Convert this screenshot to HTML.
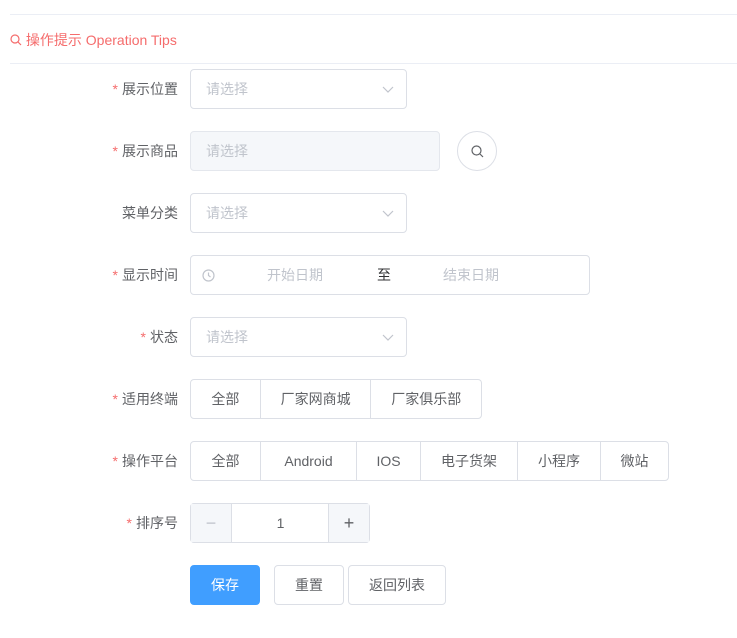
<!DOCTYPE html>
<html><head><meta charset="utf-8"><style>
*{box-sizing:border-box;margin:0;padding:0}
body{width:737px;height:638px;background:#fff;font-family:"Liberation Sans","Noto Sans CJK SC",sans-serif;font-size:14px;color:#606266;position:relative;overflow:hidden}
.a{position:absolute}
.line{position:absolute;left:10px;right:0;height:1px;background:#ebeef5}
.lbl{position:absolute;right:559px;width:170px;text-align:right;height:40px;line-height:40px;color:#606266}
.lbl b{color:#f56c6c;font-weight:normal;margin-right:4px}
.box{position:absolute;height:40px;border:1px solid #dcdfe6;border-radius:4px;background:#fff}
.ph{color:#c0c4cc;line-height:38px;padding-left:15px}
.arrow{position:absolute;right:12px;top:13px}
.seg{position:absolute;height:40px;border:1px solid #dcdfe6;display:flex;border-radius:4px;overflow:hidden}
.seg div{height:38px;line-height:38px;text-align:center;border-left:1px solid #dcdfe6;color:#606266}
.seg div:first-child{border-left:none}
.btn{position:absolute;height:40px;line-height:38px;text-align:center;border:1px solid #dcdfe6;border-radius:4px;color:#606266;background:#fff}
</style></head><body>
<div class="line" style="top:14px"></div>
<div class="a" style="left:10px;top:30px;color:#f56c6c;font-size:14px;line-height:20px">
<svg width="12" height="12" viewBox="0 0 12 12" style="vertical-align:-1px"><circle cx="5" cy="5" r="4" fill="none" stroke="#f56c6c" stroke-width="1.2"/><path d="M8 8L11 11" stroke="#f56c6c" stroke-width="1.2"/></svg> 操作提示 Operation Tips</div>
<div class="line" style="top:63px"></div>

<div class="lbl" style="top:69px"><b>*</b>展示位置</div>
<div class="box" style="left:190px;top:69px;width:217px"><div class="ph">请选择</div><svg class="arrow" width="12" height="12" viewBox="0 0 12 12"><path d="M1 4L6 9L11 4" fill="none" stroke="#c0c4cc" stroke-width="1.2"/></svg></div>

<div class="lbl" style="top:131px"><b>*</b>展示商品</div>
<div class="box" style="left:190px;top:131px;width:250px;background:#f5f7fa;border-color:#e4e7ed"><div class="ph">请选择</div></div>
<div class="box" style="left:457px;top:131px;width:40px;border-radius:50%;border-color:#dcdfe6"><svg class="a" style="left:13px;top:13px" width="13" height="13" viewBox="0 0 13 13"><circle cx="5.5" cy="5.5" r="4.5" fill="none" stroke="#606266" stroke-width="1.2"/><path d="M9 9L12 12" stroke="#606266" stroke-width="1.2"/></svg></div>

<div class="lbl" style="top:193px">菜单分类</div>
<div class="box" style="left:190px;top:193px;width:217px"><div class="ph">请选择</div><svg class="arrow" width="12" height="12" viewBox="0 0 12 12"><path d="M1 4L6 9L11 4" fill="none" stroke="#c0c4cc" stroke-width="1.2"/></svg></div>

<div class="lbl" style="top:255px"><b>*</b>显示时间</div>
<div class="box" style="left:190px;top:255px;width:400px">
<svg class="a" style="left:11px;top:13px" width="13" height="13" viewBox="0 0 13 13"><circle cx="6.5" cy="6.5" r="5.5" fill="none" stroke="#c0c4cc" stroke-width="1.2"/><path d="M6.5 3.5V6.5L8.5 8" fill="none" stroke="#c0c4cc" stroke-width="1.2"/></svg>
<span class="a" style="left:76px;top:0;line-height:38px;color:#c0c4cc">开始日期</span>
<span class="a" style="left:186px;top:0;line-height:38px;color:#303133">至</span>
<span class="a" style="left:252px;top:0;line-height:38px;color:#c0c4cc">结束日期</span>
</div>

<div class="lbl" style="top:317px"><b>*</b>状态</div>
<div class="box" style="left:190px;top:317px;width:217px"><div class="ph">请选择</div><svg class="arrow" width="12" height="12" viewBox="0 0 12 12"><path d="M1 4L6 9L11 4" fill="none" stroke="#c0c4cc" stroke-width="1.2"/></svg></div>

<div class="lbl" style="top:379px"><b>*</b>适用终端</div>
<div class="seg" style="left:190px;top:379px;width:292px"><div style="width:69px">全部</div><div style="width:111px">厂家网商城</div><div style="width:111px">厂家俱乐部</div></div>

<div class="lbl" style="top:441px"><b>*</b>操作平台</div>
<div class="seg" style="left:190px;top:441px;width:479px"><div style="width:69px">全部</div><div style="width:96px">Android</div><div style="width:64px">IOS</div><div style="width:97px">电子货架</div><div style="width:83px">小程序</div><div style="width:68px">微站</div></div>

<div class="lbl" style="top:503px"><b>*</b>排序号</div>
<div class="box" style="left:190px;top:503px;width:180px">
<div class="a" style="left:0;top:0;width:41px;height:38px;background:#f5f7fa;border-right:1px solid #dcdfe6;text-align:center;line-height:38px;color:#c0c4cc;font-size:18px">−</div>
<div class="a" style="left:41px;top:0;width:97px;height:38px;text-align:center;line-height:38px;color:#606266">1</div>
<div class="a" style="right:0;top:0;width:41px;height:38px;background:#f5f7fa;border-left:1px solid #dcdfe6;text-align:center;line-height:38px;color:#606266;font-size:18px">+</div>
</div>

<div class="btn" style="left:190px;top:565px;width:70px;background:#409eff;border-color:#409eff;color:#fff">保存</div>
<div class="btn" style="left:274px;top:565px;width:70px">重置</div>
<div class="btn" style="left:348px;top:565px;width:98px">返回列表</div>
</body></html>
